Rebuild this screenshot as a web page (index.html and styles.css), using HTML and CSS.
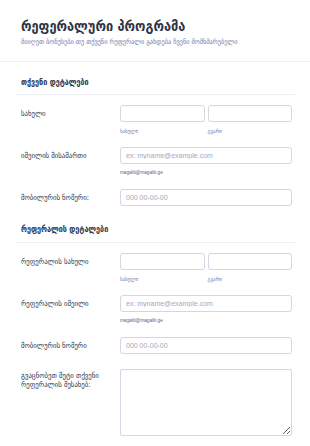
FILE: index.html
```html
<!DOCTYPE html>
<html lang="ka">
<head>
<meta charset="utf-8">
<title>რეფერალური პროგრამა</title>
<link rel="stylesheet" href="styles.css">
</head>
<body>
<header class="page-header">
  <h1 class="title">რეფერალური პროგრამა</h1>
  <p class="subtitle">მიიღეთ ბონუსები თუ თქვენი რეფერალი გახდება ჩვენი მომხმარებელი</p>
</header>
<main class="form">
  <section class="section first">
    <h2 class="section-title">თქვენი დეტალები</h2>
    <div class="row">
      <label class="label">სახელი</label>
      <div class="field pair">
        <div class="sub"><input class="input" type="text"><span class="sublabel">სახელი</span></div>
        <div class="sub"><input class="input" type="text"><span class="sublabel">გვარი</span></div>
      </div>
    </div>
    <div class="row">
      <label class="label">იმეილის მისამართი</label>
      <div class="field"><input class="input" type="text" placeholder="ex: myname@example.com"><span class="sublabel latin">magaliti@magaliti.ge</span></div>
    </div>
    <div class="row">
      <label class="label">მობილურის ნომერი:</label>
      <div class="field"><input class="input" type="text" placeholder="000 00-00-00"></div>
    </div>
  </section>
  <section class="section second">
    <h2 class="section-title">რეფერალის დეტალები</h2>
    <div class="row">
      <label class="label">რეფერალის სახელი</label>
      <div class="field pair">
        <div class="sub"><input class="input" type="text"><span class="sublabel">სახელი</span></div>
        <div class="sub"><input class="input" type="text"><span class="sublabel">გვარი</span></div>
      </div>
    </div>
    <div class="row">
      <label class="label">რეფერალის იმეილი</label>
      <div class="field"><input class="input" type="text" placeholder="ex: myname@example.com"><span class="sublabel latin">magaliti@magaliti.ge</span></div>
    </div>
    <div class="row">
      <label class="label">მობილურის ნომერი</label>
      <div class="field"><input class="input" type="text" placeholder="000 00-00-00"></div>
    </div>
    <div class="row textarea-row">
      <label class="label">გვაცნობეთ მეტი თქვენი რეფერალის შესახებ:</label>
      <div class="field"><textarea class="textarea"></textarea></div>
    </div>
  </section>
</main>
</body>
</html>
```
FILE: styles.css
```css
* { box-sizing: border-box; }
html, body { margin: 0; padding: 0; background: #fff; }
body {
  font-family: "DejaVu Sans Condensed", "DejaVu Sans", "Liberation Sans", sans-serif;
  color: #2c3345;
  overflow: hidden;
}
.page-header {
  padding: 15px 21px 14px;
  border-bottom: 1px solid #eceef3;
}
.title {
  margin: 0;
  font-size: 14.2px;
  line-height: 22px;
  font-weight: bold;
  color: #2c3345;
}
.subtitle {
  margin: 0;
  font-size: 7px;
  line-height: 10px;
  color: #6f76a7;
}
.form { padding: 0 15px; }
.section-title {
  margin: 0;
  font-size: 8px;
  line-height: 14px;
  font-weight: bold;
  padding: 0 6px 4px;
  border-bottom: 1px solid #eceef3;
}
.first .section-title { margin-top: 14px; }
.second .section-title { margin-top: 17px; padding-bottom: 5px; }
.row {
  display: grid;
  grid-template-columns: 99px 172px;
  padding-left: 6px;
  margin-top: 12px;
}
.section-title + .row { margin-top: 10px; }
.label {
  font-size: 7.5px;
  line-height: 10px;
  color: #2c3345;
  padding-top: 4px;
}
.field { display: flex; flex-direction: column; }
.pair { flex-direction: row; gap: 3px; }
.sub { flex: 1; display: flex; flex-direction: column; }
.input {
  height: 17px;
  width: 100%;
  border: 1px solid #d3d6e3;
  border-radius: 3px;
  padding: 0 5px;
  font-family: "Liberation Sans", "DejaVu Sans", sans-serif;
  font-size: 7px;
  color: #2c3345;
  background: #fff;
  outline: none;
}
.input::placeholder { color: #a3a9c0; }
.sublabel {
  margin-top: 5px;
  font-size: 5.5px;
  line-height: 8px;
  color: #6f76a7;
}
.sublabel.latin {
  font-family: "Liberation Sans", "DejaVu Sans", sans-serif;
  font-size: 4.6px;
  color: #57647e;
}
.textarea-row { margin-top: 15px; }
.textarea-row .label { padding-top: 2px; line-height: 9px; }
.textarea {
  width: 100%;
  height: 67px;
  border: 1px solid #d3d6e3;
  border-radius: 2px;
  resize: vertical;
  display: block;
  background: #fff;
}
```
